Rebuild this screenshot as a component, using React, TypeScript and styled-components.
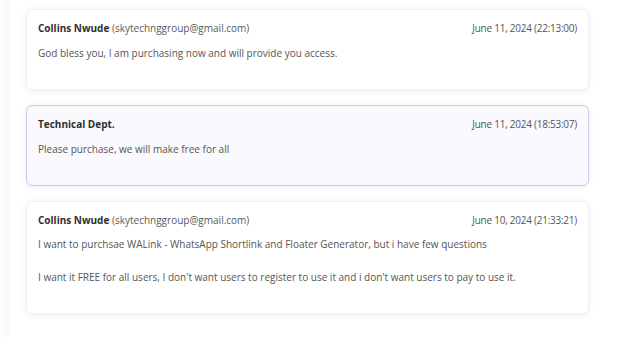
import React from "react";
import styled, { createGlobalStyle } from "styled-components";

const Global = createGlobalStyle`
  html, body { margin: 0; padding: 0; background: #ffffff; }
  body { font-family: "Open Sans", "Noto Sans", sans-serif; }
`;

const Page = styled.div`
  width: 640px;
  height: 337px;
  box-sizing: border-box;
  padding: 9px 51px 0 26px;
  display: flex;
  flex-direction: column;
  gap: 15px;
  overflow: hidden;
  background: linear-gradient(to right, #ffffff 0, #f8f8f9 8px, #ffffff 10px);
`;

const Card = styled.div<{ $staff?: boolean }>`
  box-sizing: border-box;
  border-radius: 6px;
  border: 1px solid ${(p) => (p.$staff ? "#cdc8ef" : "#f1f1f4")};
  background: ${(p) => (p.$staff ? "#f9f9fe" : "#ffffff")};
  box-shadow: 0 1px 6px rgba(0, 0, 0, 0.07);
  padding: 10px 11px 12px 11px;
`;

const Header = styled.div`
  display: flex;
  justify-content: space-between;
  align-items: center;
  line-height: 16px;
  font-size: 10px;
  color: #444;
`;

const Name = styled.span`
  font-weight: 700;
  color: #2f2f2f;
`;

const Email = styled.span`
  color: #5a5a5a;
`;

const DateText = styled.span`
  color: #555;
  letter-spacing: -0.25px;
`;

const Body = styled.div`
  margin-top: 8.75px;
  margin-bottom: 15.5px;
  font-size: 10px;
  line-height: 16.5px;
  color: #555;
`;

type Msg = { name: string; email?: string; date: string; lines: string[]; staff?: boolean };

const messages: Msg[] = [
  {
    name: "Collins Nwude",
    email: "(skytechnggroup@gmail.com)",
    date: "June 11, 2024 (22:13:00)",
    lines: ["God bless you, I am purchasing now and will provide you access."],
  },
  {
    name: "Technical Dept.",
    date: "June 11, 2024 (18:53:07)",
    lines: ["Please purchase, we will make free for all"],
    staff: true,
  },
  {
    name: "Collins Nwude",
    email: "(skytechnggroup@gmail.com)",
    date: "June 10, 2024 (21:33:21)",
    lines: [
      "I want to purchsae WALink - WhatsApp Shortlink and Floater Generator, but i have few questions",
      "",
      "I want it FREE for all users, I don't want users to register to use it and i don't want users to pay to use it.",
    ],
  },
];

export default function App() {
  return (
    <>
      <Global />
      <Page>
        {messages.map((m, i) => (
          <Card key={i} $staff={m.staff}>
            <Header>
              <span>
                <Name>{m.name}</Name>
                {m.email ? <Email> {m.email}</Email> : null}
              </span>
              <DateText>{m.date}</DateText>
            </Header>
            <Body>
              {m.lines.map((l, j) => (
                <div key={j}>{l || "\u00a0"}</div>
              ))}
            </Body>
          </Card>
        ))}
      </Page>
    </>
  );
}
